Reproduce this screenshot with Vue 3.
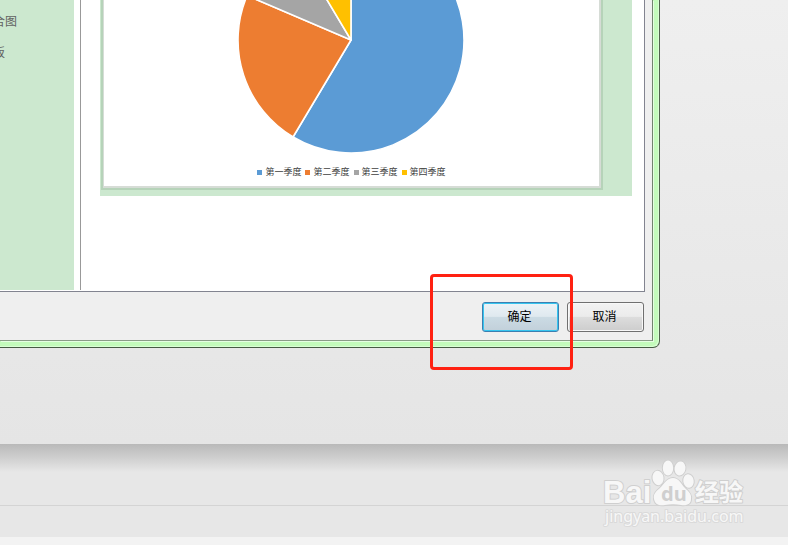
<script setup>
import { ref } from 'vue';

const chartTypes = ref(['组合图', '模板']);

const quarters = ref([
    { label: '第一季度', value: 8.2, color: '#5b9bd5' },
    { label: '第二季度', value: 3.2, color: '#ed7d31' },
    { label: '第三季度', value: 1.4, color: '#a5a5a5' },
    { label: '第四季度', value: 1.2, color: '#ffc000' }
]);

const cx = 113;
const cy = 40;
const radius = 113;

// 把销售额换算成扇形路径
const getSlices = (items) => {
    const total = items.reduce((sum, item) => sum + item.value, 0);
    let start = 0;
    return items.map((item) => {
        const end = start + (item.value / total) * Math.PI * 2;
        const large = end - start > Math.PI ? 1 : 0;
        const x1 = cx + radius * Math.sin(start);
        const y1 = cy - radius * Math.cos(start);
        const x2 = cx + radius * Math.sin(end);
        const y2 = cy - radius * Math.cos(end);
        start = end;
        return {
            ...item,
            path: `M${cx} ${cy} L${x1} ${y1} A${radius} ${radius} 0 ${large} 1 ${x2} ${y2} Z`
        };
    });
};

const slices = getSlices(quarters.value);
</script>

<template>
    <div class="page">
        <main class="desktop">
            <section class="dialog">
                <div class="dialog-inner">
                    <div class="content">
                        <ul class="type-list">
                            <li v-for="name in chartTypes" :key="name">
                                <button type="button" class="type-item">{{ name }}</button>
                            </li>
                        </ul>
                        <div class="preview">
                            <div class="stage">
                                <div class="chart-card">
                                    <svg class="pie" width="228" height="154" viewBox="0 0 228 154">
                                        <path
                                            v-for="slice in slices"
                                            :key="slice.label"
                                            :d="slice.path"
                                            :fill="slice.color"
                                            stroke="#ffffff"
                                            stroke-width="1.6"
                                            stroke-linejoin="round"
                                        />
                                    </svg>
                                    <ul class="legend">
                                        <li v-for="item in quarters" :key="item.label" class="legend-item">
                                            <span class="marker" :style="{ backgroundColor: item.color }"></span>
                                            <span>{{ item.label }}</span>
                                        </li>
                                    </ul>
                                </div>
                            </div>
                        </div>
                    </div>
                    <footer class="actions">
                        <button type="button" class="btn btn-primary">确定</button>
                        <button type="button" class="btn">取消</button>
                        <span class="highlight"></span>
                    </footer>
                </div>
            </section>
        </main>
        <div class="shelf">
            <div class="shelf-top"></div>
            <div class="shelf-bottom"></div>
            <svg class="watermark" width="150" height="72" viewBox="0 0 150 72">
                <g class="logo">
                    <text x="3" y="47" class="brand" font-size="31">Bai</text>
                    <path d="M73 22 C67 22 64 28 60 32 C55 36 53 39 54 43 C55 49 60 50 65 49 C70 48 76 48 81 49 C87 50 91 48 91 43 C92 38 88 35 85 32 C81 28 79 22 73 22 Z" />
                    <ellipse cx="58" cy="22" rx="5.5" ry="7.2" transform="rotate(-8 58 22)" />
                    <ellipse cx="68" cy="12" rx="5.2" ry="7.4" />
                    <ellipse cx="80" cy="12.5" rx="5.4" ry="7" transform="rotate(10 80 12.5)" />
                    <ellipse cx="88.5" cy="25" rx="5.2" ry="6.8" transform="rotate(-8 88.5 25)" />
                    <text x="95" y="45" class="brand-cn" font-size="24">经验</text>
                    <text x="5" y="66" class="site" font-size="16">jingyan.baidu.com</text>
                </g>
                <text x="61" y="45" class="du" font-size="20">du</text>
            </svg>
        </div>
    </div>
</template>

<style>
body {
    margin: 0;
    background-color: #f3f3f3;
}
</style>

<style scoped>
.page {
    font-family: "Liberation Sans", "Noto Sans CJK SC", sans-serif;
    font-size: 12px;
    color: #000000;
    overflow: hidden;
}

ul {
    list-style: none;
    margin: 0;
    padding: 0;
}

.desktop {
    padding: 0 128px 96px 0;
    background: linear-gradient(#efefef, #e5e5e5);
}

/* 对话框的绿色玻璃边框 */
.dialog {
    padding: 0 6px 6px 0;
    background-color: #c3fbbb;
    border-right: 1px solid #52634f;
    border-bottom: 1px solid #465b43;
    border-radius: 0 0 7px 0;
    box-shadow: inset -1px -1px 0 #d9ffd4;
}

.dialog-inner {
    background-color: #efefef;
    border-right: 1px solid #71846e;
    border-bottom: 1px solid #8a9d87;
    box-shadow: 1px 1px 0 #e5ffe2;
    padding-right: 7px;
}

.content {
    display: flex;
    background-color: #ffffff;
    border-right: 1px solid #828490;
    border-bottom: 1px solid #828490;
}

.type-list {
    width: 74px;
    box-sizing: border-box;
    flex: none;
    padding-top: 5px;
    margin-bottom: 1px;
    background-color: #cce8cf;
    overflow: hidden;
}

.type-item {
    display: block;
    height: 31px;
    margin-left: -19px;
    padding: 0;
    border: 0;
    background: none;
    font: inherit;
    color: #626262;
    white-space: nowrap;
}

.preview {
    flex: 1;
    margin: 0 0 1px 6px;
    padding: 0 12px 94px 19px;
    border-left: 1px solid #999999;
}

.stage {
    padding: 0 29px 5px 1px;
    background-color: #cce8cf;
}

.chart-card {
    display: flex;
    flex-direction: column;
    align-items: center;
    padding-bottom: 8px;
    background-color: #ffffff;
    border: solid #d6dcd6;
    border-width: 0 2px 2px 1px;
    box-shadow: 0 0 0 2px #b6d3b9;
    margin: 0 2px 3px;
}

.pie {
    display: block;
}

.legend {
    display: flex;
    gap: 4px;
    margin-top: 12px;
}

.legend-item {
    display: flex;
    align-items: center;
    gap: 3px;
    font-size: 9px;
    line-height: 12px;
    color: #404040;
    white-space: nowrap;
}

.marker {
    width: 5px;
    height: 5px;
}

.actions {
    position: relative;
    display: flex;
    justify-content: flex-end;
    gap: 8px;
    padding: 10px 1px 8px 0;
}

.btn {
    width: 77px;
    height: 30px;
    padding: 0 2px 3px 0;
    border: 1px solid #707070;
    border-radius: 3px;
    background: linear-gradient(#f3f3f3, #ebebeb 48%, #dddddd 50%, #cdcdcd);
    box-shadow: inset 0 0 0 1px #f8f8f8;
    font: inherit;
    color: #000000;
}

.btn-primary {
    border-color: #3c7fb1;
    background: linear-gradient(#edf3f7, #dfe9ef 48%, #cbdbe4 50%, #c2d0da);
    box-shadow: inset 0 0 0 1px #36c5ef;
}

.highlight {
    position: absolute;
    top: -18px;
    right: 72px;
    width: 143px;
    height: 96px;
    box-sizing: border-box;
    border: 3px solid #ff2112;
    border-radius: 4px;
    pointer-events: none;
}

.shelf {
    position: relative;
    background-color: #e7e7e7;
}

.shelf-top {
    height: 61px;
    background: linear-gradient(#b9b9b9, #cfcfcf 14px, #e7e7e7 28px);
    border-bottom: 1px solid #d4d4d4;
}

.shelf-bottom {
    height: 31px;
}

.watermark {
    position: absolute;
    top: 12px;
    right: 38px;
    overflow: visible;
}

.logo {
    fill: #f7f7f7;
    stroke: #cfcfcf;
    stroke-width: 2px;
    stroke-linejoin: round;
    paint-order: stroke;
}

.brand {
    font-family: "Liberation Sans", sans-serif;
    font-weight: bold;
}

.brand-cn {
    font-family: "Noto Sans CJK SC", sans-serif;
    font-weight: bold;
}

.site {
    font-family: "Noto Sans", sans-serif;
    stroke: #dadada;
}

.du {
    font-family: "Noto Sans", sans-serif;
    font-weight: bold;
    fill: #cfcfcf;
}
</style>
